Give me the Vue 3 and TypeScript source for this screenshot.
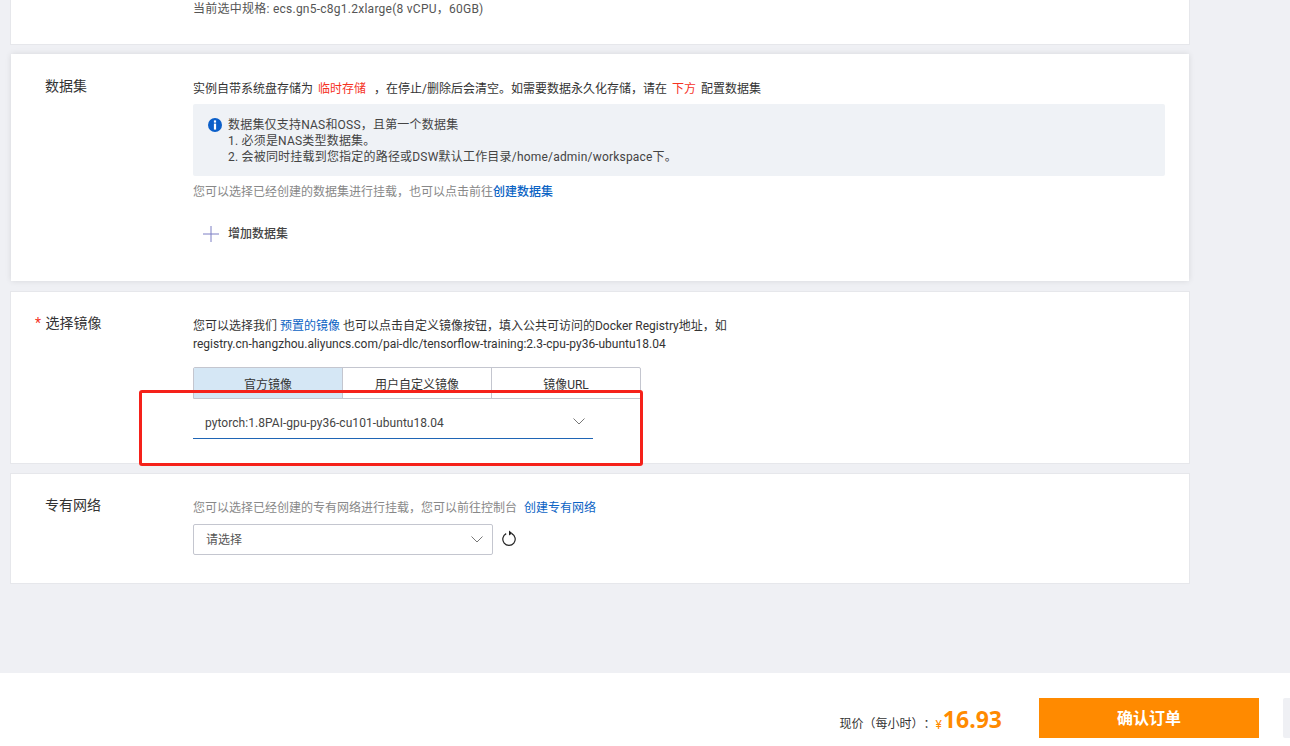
<template>
  <div class="page">
    <div class="main">
      <section class="card card-spec">
        <div class="row">
          <div class="label"></div>
          <div class="content">
            <p class="spec-line">当前选中规格: ecs.gn5-c8g1.2xlarge(8 vCPU，60GB)</p>
          </div>
        </div>
      </section>

      <section class="card card-dataset">
        <div class="row">
          <div class="label">数据集</div>
          <div class="content">
            <p class="line-strong">
              实例自带系统盘存储为 <span class="red">临时存储</span> <span class="after-red">，在停止/删除后会清空。如需要数据永久化存储，请在</span> <span class="red">下方</span> 配置数据集
            </p>
            <div class="notice">
              <svg class="info-icon" width="14" height="14" viewBox="0 0 14 14">
                <circle cx="7" cy="7" r="7" fill="#0b5fc9" />
                <rect x="5.9" y="2.4" width="2.2" height="2.2" fill="#fff" />
                <rect x="5.9" y="5.6" width="2.2" height="6" fill="#fff" />
              </svg>
              <div class="notice-text">
                <div>数据集仅支持NAS和OSS，且第一个数据集</div>
                <div>1. 必须是NAS类型数据集。</div>
                <div>2. 会被同时挂载到您指定的路径或DSW默认工作目录/home/admin/workspace下。</div>
              </div>
            </div>
            <p class="hint">您可以选择已经创建的数据集进行挂载，也可以点击前往<a class="link bold">创建数据集</a></p>
            <div class="add-row">
              <svg width="16" height="16" viewBox="0 0 16 16">
                <path d="M0 8h16M8 0v16" stroke="#7c7fc4" stroke-width="1" fill="none" />
              </svg>
              <span>增加数据集</span>
            </div>
          </div>
        </div>
      </section>

      <section class="card card-image">
        <div class="row">
          <div class="label"><span class="star">*</span> 选择镜像</div>
          <div class="content">
            <p class="line-strong image-desc">
              您可以选择我们 <a class="link">预置的镜像</a> 也可以点击自定义镜像按钮，填入公共可访问的Docker Registry地址，如<br />
              registry.cn-hangzhou.aliyuncs.com/pai-dlc/tensorflow-training:2.3-cpu-py36-ubuntu18.04
            </p>
            <div class="tabs">
              <div
                v-for="(tab, index) in tabs"
                :key="tab"
                class="tab"
                :class="{ active: index === 0 }"
              >{{ tab }}</div>
            </div>
            <div class="image-select">
              <span>pytorch:1.8PAI-gpu-py36-cu101-ubuntu18.04</span>
              <svg width="12" height="7" viewBox="0 0 12 7">
                <path d="M.5.5 6 6 11.5.5" stroke="#777" fill="none" />
              </svg>
            </div>
          </div>
        </div>
        <div class="annotation"></div>
      </section>

      <section class="card card-network">
        <div class="row">
          <div class="label">专有网络</div>
          <div class="content">
            <p class="hint network-hint">您可以选择已经创建的专有网络进行挂载，您可以前往控制台 <a class="link network-link">创建专有网络</a></p>
            <div class="select-row">
              <div class="select">
                <span>请选择</span>
                <svg width="12" height="7" viewBox="0 0 12 7">
                  <path d="M.5.5 6 6 11.5.5" stroke="#777" fill="none" />
                </svg>
              </div>
              <svg class="refresh" width="16" height="17" viewBox="0 0 16 17">
                <path d="M5.2 3.6A6.2 6.2 0 1 0 10.8 3.6" stroke="#222" stroke-width="1.2" fill="none" />
                <path d="M8 .6 11.4 3.2 8 5.6Z" fill="#222" />
              </svg>
            </div>
          </div>
        </div>
      </section>
    </div>

    <footer class="footer">
      <span class="price-label">现价（每小时）：</span>
      <span class="yen">¥</span>
      <span class="price">16.93</span>
      <button class="confirm">确认订单</button>
      <div class="side-btn"></div>
    </footer>
  </div>
</template>

<script setup lang="ts">
const tabs: string[] = ['官方镜像', '用户自定义镜像', '镜像URL']
</script>

<style>
body {
  margin: 0;
  background: #eff0f4;
}
</style>

<style scoped>
.page {
  width: 1290px;
  height: 746px;
  display: flex;
  flex-direction: column;
  overflow: hidden;
  font-family: Roboto, "Noto Sans CJK SC", sans-serif;
  font-size: 12px;
  line-height: 16px;
  color: #333;
  background: #eff0f4;
  text-spacing-trim: space-all;
}

.main {
  flex: 1;
  padding-left: 10px;
}

.card {
  position: relative;
  width: 1180px;
  box-sizing: border-box;
  background: #fff;
  border: 1px solid #e6e7eb;
}

.card-spec {
  height: 45px;
  border-top: 0;
  margin-bottom: 9px;
}

.card-dataset {
  height: 227px;
  border: 0;
  width: 1178px;
  margin: 0 0 10px 1px;
  box-shadow: 0 0 6px rgba(0, 0, 0, 0.1);
}

.card-image {
  height: 173px;
  margin-bottom: 9px;
}

.card-network {
  height: 111px;
}

.row {
  display: flex;
}

.label {
  width: 182px;
  flex: none;
  box-sizing: border-box;
  padding-left: 34px;
  font-size: 14px;
  line-height: 20px;
  color: #333;
}

.content {
  flex: 1;
  min-width: 0;
}

p {
  margin: 0;
}

.spec-line {
  margin-top: 1px;
  color: #555;
  letter-spacing: 0.25px;
}

.card-dataset .label {
  padding-top: 22px;
}

.card-dataset .content {
  padding-top: 27px;
  padding-right: 24px;
}

.line-strong {
  color: #333;
  line-height: 16px;
}

.red {
  color: #f5331f;
  margin: 0 2px;
}

.after-red {
  margin-left: 3px;
}

.notice {
  margin-top: 7px;
  height: 72px;
  box-sizing: border-box;
  padding: 13px 15px 11px;
  display: flex;
  gap: 6px;
  background: #eff2f6;
  border-radius: 2px;
}

.info-icon {
  flex: none;
  margin-top: 1px;
}

.notice-text {
  line-height: 16px;
  color: #444;
  letter-spacing: 0.2px;
}

.hint {
  color: #888;
}

.card-dataset .hint {
  margin-top: 8px;
}

.link {
  color: #0b63c4;
}

.bold {
  font-weight: 500;
}

.add-row {
  margin-top: 26px;
  padding-left: 10px;
  display: flex;
  align-items: center;
  gap: 9px;
  color: #444;
  font-weight: 500;
}

.card-image .label {
  padding-top: 21px;
  padding-left: 24px;
}

.star {
  color: #f5331f;
  margin-right: 1px;
}

.card-image .content {
  padding-top: 25px;
}

.image-desc {
  line-height: 18px;
}

.tabs {
  margin-top: 14px;
  width: 448px;
  height: 32px;
  display: flex;
  box-sizing: border-box;
  border: 1px solid #c4c6cf;
  border-radius: 2px 2px 0 0;
}

.tab {
  flex: 1;
  display: flex;
  align-items: center;
  justify-content: center;
  padding-top: 3px;
  border-left: 1px solid #c4c6cf;
  color: #333;
}

.tab:first-child {
  border-left: 0;
}

.tab.active {
  background: #d5e7f5;
}

.image-select {
  width: 400px;
  height: 40px;
  box-sizing: border-box;
  padding: 8px 8px 0 12px;
  display: flex;
  justify-content: space-between;
  border-bottom: 1px solid #1f65b5;
  color: #444;
  letter-spacing: 0.05px;
}

.image-select span {
  margin-top: 8px;
}

.image-select svg {
  margin-top: 11px;
}

.annotation {
  position: absolute;
  left: 128px;
  top: 98px;
  width: 504px;
  height: 76px;
  box-sizing: border-box;
  border: 3px solid #f5211a;
  border-radius: 3px;
}

.card-network .label {
  padding-top: 21px;
}

.card-network .content {
  padding-top: 26px;
}

.network-link {
  margin-left: 4px;
}

.select-row {
  margin-top: 8px;
  display: flex;
  align-items: center;
  gap: 8px;
}

.select {
  width: 300px;
  height: 31px;
  box-sizing: border-box;
  padding: 0 9px 0 12px;
  display: flex;
  align-items: center;
  justify-content: space-between;
  border: 1px solid #c4c6cf;
  border-radius: 2px;
  color: #555;
}

.refresh {
  margin-top: -2px;
}

.footer {
  flex: none;
  height: 73px;
  box-sizing: border-box;
  padding-top: 25px;
  display: flex;
  align-items: flex-start;
  justify-content: flex-end;
  background: #fff;
}

.price-label {
  margin-top: 18px;
  color: #333;
}

.yen {
  margin-top: 19px;
  margin-right: 1px;
  color: #ff8a00;
}

.price {
  margin-right: 37px;
  font-family: "Open Sans", sans-serif;
  font-size: 23px;
  line-height: 30px;
  font-weight: 700;
  color: #ff8a00;
  margin-top: 6px;
}

.confirm {
  width: 220px;
  height: 40px;
  border: 0;
  padding: 0 0 2px;
  background: #ff8a00;
  color: #fff;
  font-family: Roboto, "Noto Sans CJK SC", sans-serif;
  font-size: 16px;
  font-weight: 700;
}

.side-btn {
  width: 7px;
  height: 40px;
  margin-left: 24px;
  background: #eff0f4;
  border-radius: 2px 0 0 2px;
}
</style>
